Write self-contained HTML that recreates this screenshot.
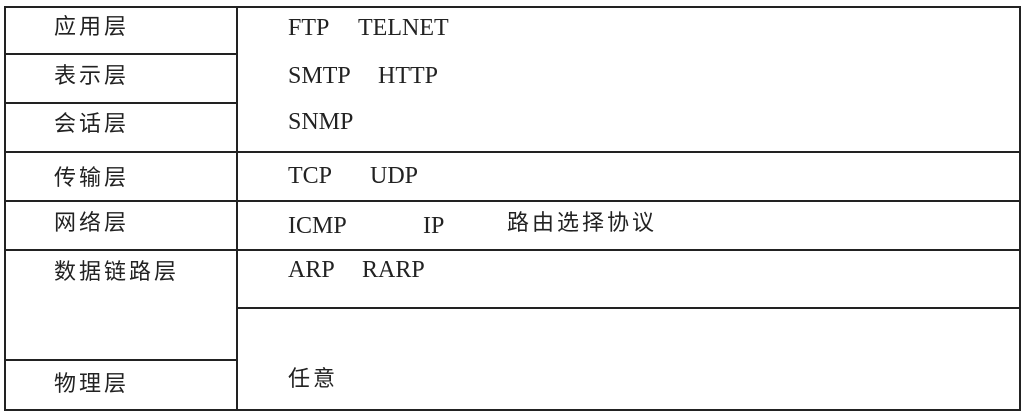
<html><head><style>
body{margin:0;width:1026px;height:414px;background:#fff;position:relative;overflow:hidden}
.l{position:absolute;background:#222}
.t{position:absolute;font-size:24px;line-height:24px;color:#222;white-space:pre;font-family:"Liberation Serif","Noto Sans CJK SC",serif}
.c{font-family:"Liberation Sans","Noto Sans CJK SC",sans-serif;font-size:22px;letter-spacing:3px}
</style></head><body>
<div class="l" style="left:4px;top:6px;width:1017px;height:2px"></div>
<div class="l" style="left:4px;top:409px;width:1017px;height:2px"></div>
<div class="l" style="left:4px;top:6px;width:2px;height:405px"></div>
<div class="l" style="left:1019px;top:6px;width:2px;height:405px"></div>
<div class="l" style="left:236px;top:6px;width:2px;height:405px"></div>
<div class="l" style="left:4px;top:53px;width:233px;height:2px"></div>
<div class="l" style="left:4px;top:102px;width:233px;height:2px"></div>
<div class="l" style="left:4px;top:151px;width:1017px;height:2px"></div>
<div class="l" style="left:4px;top:200px;width:1017px;height:2px"></div>
<div class="l" style="left:4px;top:249px;width:1017px;height:2px"></div>
<div class="l" style="left:4px;top:359px;width:233px;height:2px"></div>
<div class="l" style="left:237px;top:307px;width:784px;height:2px"></div>
<div class="t c" style="left:54px;top:15px">应用层</div>
<div class="t c" style="left:54px;top:64px">表示层</div>
<div class="t c" style="left:54px;top:112px">会话层</div>
<div class="t c" style="left:54px;top:166px">传输层</div>
<div class="t c" style="left:54px;top:211px">网络层</div>
<div class="t c" style="left:54px;top:260px">数据链路层</div>
<div class="t c" style="left:54px;top:372px">物理层</div>
<div class="t" style="left:288px;top:16px">FTP</div>
<div class="t" style="left:358px;top:16px">TELNET</div>
<div class="t" style="left:288px;top:64px">SMTP</div>
<div class="t" style="left:378px;top:64px">HTTP</div>
<div class="t" style="left:288px;top:110px">SNMP</div>
<div class="t" style="left:288px;top:164px">TCP</div>
<div class="t" style="left:370px;top:164px">UDP</div>
<div class="t" style="left:288px;top:214px">ICMP</div>
<div class="t" style="left:423px;top:214px">IP</div>
<div class="t c" style="left:507px;top:211px">路由选择协议</div>
<div class="t" style="left:288px;top:258px">ARP</div>
<div class="t" style="left:362px;top:258px">RARP</div>
<div class="t c" style="left:288px;top:367px">任意</div>
</body></html>
